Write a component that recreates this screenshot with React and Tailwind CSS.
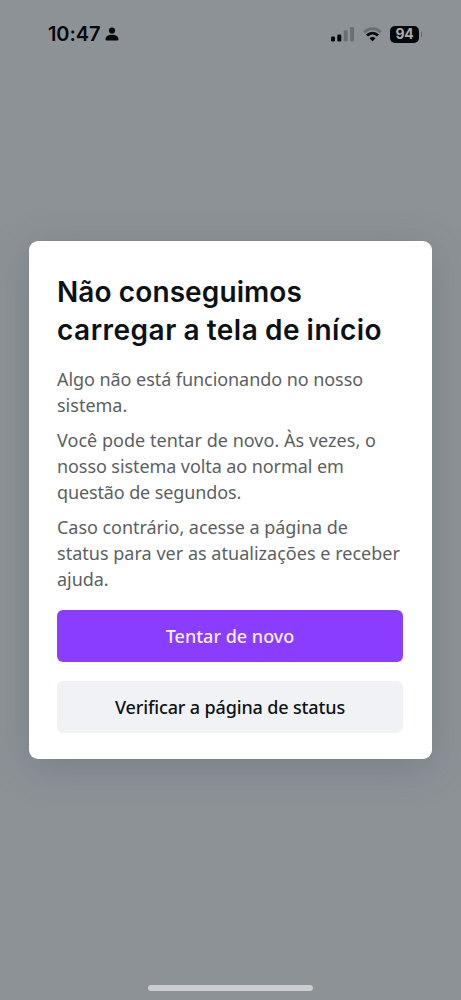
import React from 'react';

function StatusBar() {
  return (
    <header className="flex h-[68px] items-center justify-between pl-12 pr-[38px] text-[#05080b]">
      <div className="flex items-center gap-[5px]">
        <span className="font-['Inter',sans-serif] text-[20px] font-semibold leading-6 tracking-[-0.1px]">10:47</span>
        <svg className="h-[14px] w-[14px]" viewBox="0 0 14 14" fill="currentColor" aria-hidden="true">
          <circle cx="7" cy="3.5" r="3.1" />
          <path d="M.5 12.2C.5 9.3 3.2 7.7 7 7.7s6.500 1.600 6.500 4.500c0 .8-.5 1.200-1.300 1.200H1.800C1 13.400.5 13 .5 12.200Z" />
        </svg>
      </div>
      <div className="flex items-center">
        <svg className="h-[16px] w-[24px]" viewBox="0 0 24 16" fill="currentColor" aria-hidden="true">
          <rect x="0" y="10.500" width="4" height="5" rx="1.200" />
          <rect x="6.300" y="8.500" width="4" height="7" rx="1.200" />
          <rect x="12.700" y="4.200" width="4" height="11.300" rx="1.200" opacity=".25" />
          <rect x="19.100" y="1" width="4" height="14.500" rx="1.200" opacity=".25" />
        </svg>
        <svg className="ml-[8px] h-[15px] w-[20px]" viewBox="0 0 20 15" aria-hidden="true">
          <path d="M1.200 5.200C6 .5 13 .5 17.800 5.200" fill="none" stroke="currentColor" strokeWidth="2.800" opacity=".25" />
          <path d="M4 8.500C7.200 5.300 11.800 5.300 15 8.500" fill="none" stroke="currentColor" strokeWidth="2.900" />
          <path d="M6.500 11.200c1.700-1.700 4.300-1.700 6 0L9.500 14.400Z" fill="currentColor" />
        </svg>
        <div className="ml-[7px] flex h-[17px] w-[29px] items-center justify-center rounded-[5px] bg-[#05080b] font-['Inter',sans-serif] text-[14px] font-bold leading-none tracking-[-0.2px] text-[#a9acaf]">94</div>
        <div className="ml-[1.500px] mr-[1px] h-[5px] w-[1.500px] rounded-r-full bg-[#65696d]" />
      </div>
    </header>
  );
}

function Line({ className = '', children }) {
  return <span className={'block whitespace-nowrap ' + className}>{children}</span>;
}

export default function App() {
  return (
    <div className="flex h-[1000px] w-[461px] flex-col overflow-hidden bg-[#8d9296]">
      <StatusBar />
      <main className="mx-auto mt-[173px] h-[518px] w-[403px] rounded-[9px] bg-white px-[28px] pt-[32px] font-['Noto_Sans',sans-serif] shadow-[0_8px_40px_rgba(57,76,96,0.27)]">
        <h1 className="font-['Inter',sans-serif] text-[28px] font-semibold leading-[38px] text-[#0d1216]">
          <Line className="tracking-[0.1px]">Não conseguimos</Line>
          <Line className="tracking-[0.5px] [word-spacing:-0.9px]">carregar a tela de início</Line>
        </h1>
        <div className="mt-[17px] flex flex-col gap-[9px] text-[18px] leading-[26px] text-[#5c5f62]">
          <p>
            <Line className="tracking-[-0.06px]">Algo não está funcionando no nosso</Line>
            <Line>sistema.</Line>
          </p>
          <p>
            <Line className="tracking-[0.03px]">Você pode tentar de novo. Às vezes, o</Line>
            <Line className="tracking-[-0.08px]">nosso sistema volta ao normal em</Line>
            <Line className="tracking-[-0.12px]">questão de segundos.</Line>
          </p>
          <p>
            <Line className="tracking-[-0.04px]">Caso contrário, acesse a página de</Line>
            <Line className="tracking-[0.02px]">status para ver as atualizações e receber</Line>
            <Line className="tracking-[-0.05px]">ajuda.</Line>
          </p>
        </div>
        <div className="mt-[18px] flex flex-col gap-[19px] text-[18px] font-medium leading-[26px]">
          <button className="flex h-[52px] w-[346px] items-center justify-center rounded-[6px] bg-[#8b3dff] text-[#f7edff]">Tentar de novo</button>
          <button className="flex h-[52px] w-[346px] items-center justify-center rounded-[6px] bg-[#f0f2f5] tracking-[-0.14px] text-[#0d1216]">Verificar a página de status</button>
        </div>
      </main>
      <div className="mx-auto mb-[9px] mt-auto h-[6px] w-[165px] rounded-full bg-[#cccdd0]" />
    </div>
  );
}
